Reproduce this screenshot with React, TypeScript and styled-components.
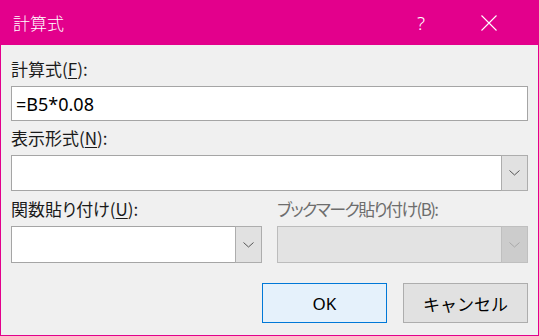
import React from "react";
import styled, { createGlobalStyle } from "styled-components";

const GlobalStyle = createGlobalStyle`
  html, body {
    margin: 0;
    padding: 0;
    background: #f0f0f0;
  }
  body {
    font-family: "Noto Sans", "Noto Sans CJK JP", sans-serif;
  }
`;

const Window = styled.div`
  box-sizing: border-box;
  width: 539px;
  height: 336px;
  border: 1px solid #e3008c;
  background: #f0f0f0;
  display: flex;
  flex-direction: column;
`;

const TitleBar = styled.div`
  height: 44px;
  background: #e3008c;
  color: #fff;
  display: flex;
  align-items: center;
  padding: 0 15px 0 12px;
`;

const Title = styled.div`
  flex: 1;
  font-family: "Noto Sans CJK JP", sans-serif;
  font-size: 17px;
  font-weight: 300;
  margin-top: -1px;
`;

const CaptionButton = styled.div`
  width: 68px;
  height: 44px;
  display: flex;
  align-items: center;
  justify-content: center;
  font-family: "Noto Sans", sans-serif;
  font-size: 19px;
  font-weight: 300;
`;

const Body = styled.div`
  flex: 1;
  display: flex;
  flex-direction: column;
  padding: 12px 10px 0 10px;
`;

const Label = styled.label<{ $disabled?: boolean }>`
  display: block;
  height: 24px;
  line-height: 24px;
  margin-bottom: 5px;
  font-family: "Noto Sans CJK JP", sans-serif;
  font-size: 17px;
  font-feature-settings: "palt";
  letter-spacing: ${(p) => (p.$disabled ? "-1.6px" : "0")};
  color: ${(p) => (p.$disabled ? "#6d6d6d" : "#1a1a1a")};
  u {
    text-underline-offset: 2px;
  }
`;

const TextBox = styled.div<{ $h: number }>`
  box-sizing: border-box;
  height: ${(p) => p.$h}px;
  background: #fff;
  border: 1px solid #a5a5a5;
  display: flex;
  align-items: center;
  padding-left: 4px;
  font-family: "Noto Sans", sans-serif;
  font-size: 18px;
  color: #000;
`;

const Combo = styled.div<{ $h: number; $disabled?: boolean }>`
  box-sizing: border-box;
  height: ${(p) => p.$h}px;
  background: ${(p) => (p.$disabled ? "#e3e3e3" : "#fff")};
  border: 1px solid ${(p) => (p.$disabled ? "#bcbcbc" : "#a5a5a5")};
  display: flex;
  justify-content: flex-end;
`;

const DropButton = styled.div<{ $disabled?: boolean }>`
  box-sizing: border-box;
  width: 27px;
  margin: -1px -1px -1px 0;
  background: ${(p) => (p.$disabled ? "#cccccc" : "#e1e1e1")};
  border: 1px solid ${(p) => (p.$disabled ? "#bfbfbf" : "#adadad")};
  display: flex;
  align-items: center;
  justify-content: center;
`;

const Field = styled.div<{ $gap: number }>`
  display: flex;
  flex-direction: column;
  margin-bottom: ${(p) => p.$gap}px;
`;

const Pair = styled.div`
  display: grid;
  grid-template-columns: 1fr 1fr;
  column-gap: 15px;
`;

const ButtonRow = styled.div`
  display: flex;
  justify-content: flex-end;
  gap: 16px;
  margin-top: 20px;
`;

const Button = styled.button<{ $primary?: boolean }>`
  box-sizing: border-box;
  width: 125px;
  height: 40px;
  background: ${(p) => (p.$primary ? "#e5f1fb" : "#e1e1e1")};
  border: 1px solid ${(p) => (p.$primary ? "#0078d7" : "#adadad")};
  font-family: "Noto Sans", "Noto Sans CJK JP", sans-serif;
  font-size: 17px;
  color: #000;
  padding: 0;
`;

const Chevron: React.FC<{ disabled?: boolean }> = ({ disabled }) => (
  <svg width="11" height="6" viewBox="0 0 11 6">
    <polyline
      points="0.5,0.5 5.5,5 10.5,0.5"
      fill="none"
      stroke={disabled ? "#a8a8a8" : "#555"}
      strokeWidth="1"
    />
  </svg>
);

const CloseIcon = () => (
  <svg width="16" height="16" viewBox="0 0 16 16">
    <path d="M0.5 0.5 L15.5 15.5 M15.5 0.5 L0.5 15.5" stroke="#fff" strokeWidth="1.1" />
  </svg>
);

export default function App() {
  return (
    <>
      <GlobalStyle />
      <Window>
        <TitleBar>
          <Title>計算式</Title>
          <CaptionButton>?</CaptionButton>
          <CaptionButton>
            <CloseIcon />
          </CaptionButton>
        </TitleBar>
        <Body>
          <Field $gap={5}>
            <Label>
              計算式(<u>F</u>):
            </Label>
            <TextBox $h={35}>=B5*0.08</TextBox>
          </Field>
          <Field $gap={6}>
            <Label>
              表示形式(<u>N</u>):
            </Label>
            <Combo $h={36}>
              <DropButton>
                <Chevron />
              </DropButton>
            </Combo>
          </Field>
          <Pair>
            <Field $gap={0}>
              <Label>
                関数貼り付け(<u>U</u>):
              </Label>
              <Combo $h={37}>
                <DropButton>
                  <Chevron />
                </DropButton>
              </Combo>
            </Field>
            <Field $gap={0}>
              <Label $disabled>ブックマーク貼り付け(B):</Label>
              <Combo $h={37} $disabled>
                <DropButton $disabled>
                  <Chevron disabled />
                </DropButton>
              </Combo>
            </Field>
          </Pair>
          <ButtonRow>
            <Button $primary>OK</Button>
            <Button>キャンセル</Button>
          </ButtonRow>
        </Body>
      </Window>
    </>
  );
}
